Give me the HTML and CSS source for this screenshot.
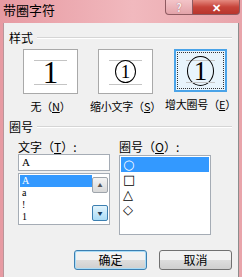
FILE: index.html
```html
<!DOCTYPE html>
<html lang="zh">
<head>
    <meta charset="UTF-8">
    <title>带圈字符</title>
    <link rel="stylesheet" href="styles.css">
</head>
<body>
    <div class="window">
        <div class="titlebar">
            <span class="title">带圈字符</span>
            <div class="caption-btns">
                <span class="cap help">?</span>
                <span class="cap close">✕</span>
            </div>
        </div>

        <div class="client">
            <!-- 样式 -->
            <div class="group-head"><span>样式</span><i></i></div>
            <div class="styles">
                <div class="opt">
                    <div class="preview">
                        <span class="guide top"></span>
                        <span class="digit">1</span>
                        <span class="guide bottom"></span>
                    </div>
                    <div class="opt-label">无（<u>N</u>）</div>
                </div>
                <div class="opt">
                    <div class="preview">
                        <span class="guide top"></span>
                        <span class="ring small">1</span>
                        <span class="guide bottom"></span>
                    </div>
                    <div class="opt-label">缩小文字（<u>S</u>）</div>
                </div>
                <div class="opt">
                    <div class="preview selected">
                        <span class="guide top"></span>
                        <span class="ring big">1</span>
                        <span class="guide bottom"></span>
                    </div>
                    <div class="opt-label">增大圈号（<u>E</u>）</div>
                </div>
            </div>

            <!-- 圈号 -->
            <div class="group-head second"><span>圈号</span><i></i></div>
            <div class="cols">
                <div class="col">
                    <div class="field-label">文字（<u>T</u>）:</div>
                    <div class="textbox">A</div>
                    <div class="listbox combo">
                        <ul class="items">
                            <li class="sel">A</li>
                            <li>a</li>
                            <li>!</li>
                            <li>1</li>
                        </ul>
                        <div class="scroll">
                            <span class="arrow up">▲</span>
                            <span class="arrow down">▼</span>
                        </div>
                    </div>
                </div>
                <div class="col">
                    <div class="field-label">圈号（<u>O</u>）:</div>
                    <ul class="listbox shapes">
                        <li class="sel">○</li>
                        <li>□</li>
                        <li>△</li>
                        <li>◇</li>
                    </ul>
                </div>
            </div>

            <div class="buttons">
                <button class="btn default">确定</button>
                <button class="btn">取消</button>
            </div>
        </div>
    </div>
</body>
</html>
```

FILE: styles.css
```css
body {
    margin: 0;
    font-family: "Noto Sans CJK SC", "Liberation Sans", sans-serif;
    font-size: 12px;
    color: #000;
    background: #f0f0f0;
}

.window {
    width: 242px;
    height: 277px;
    display: flex;
    flex-direction: column;
    background: linear-gradient(to right, #e79aa2, #f1b9be 55%, #e8a4aa);
    overflow: hidden;
}

.titlebar {
    height: 23px;
    display: flex;
    justify-content: space-between;
    align-items: flex-start;
    flex-shrink: 0;
}

.title {
    font-size: 13px;
    line-height: 14px;
    padding: 3px 0 0 3px;
}

.caption-btns {
    display: flex;
    margin-right: 2px;
}

.cap {
    height: 14px;
    line-height: 14px;
    text-align: center;
    color: #fff;
    font-weight: bold;
    border: 1px solid #8e5a60;
    border-top: none;
}

.help {
    width: 26px;
    font-size: 11px;
    background: linear-gradient(#f3c4c8, #e3a3a9);
    border-radius: 0 0 0 4px;
    color: #fbeaec;
    text-shadow: 0 0 1px #8a5a60;
}

.close {
    width: 46px;
    font-size: 11px;
    background: linear-gradient(#e58a80, #c7443a 50%, #b8352c);
    border-left: none;
    border-radius: 0 0 4px 0;
}

.client {
    flex: 1;
    margin: 0 3px 0 3px;
    border-left: 1px solid #b9959a;
    border-right: 1px solid #8d8d8d;
    background: #f0f0f0;
    display: flex;
    flex-direction: column;
}

.group-head {
    display: flex;
    align-items: center;
    gap: 4px;
    margin: 7px 6px 0 5px;
    line-height: 15px;
}

.group-head i {
    flex: 1;
    height: 0;
    border-top: 1px solid #d5d5d5;
    border-bottom: 1px solid #fff;
    margin-top: 1px;
}

.group-head.second {
    margin-top: 5px;
}

.styles {
    display: flex;
    margin: 4px 0 0 9px;
}

.opt {
    width: 76px;
    display: flex;
    flex-direction: column;
    align-items: center;
}

.preview {
    width: 53px;
    height: 43px;
    background: #fff;
    border: 1px solid #a9a9a9;
    display: flex;
    flex-direction: column;
    align-items: center;
    justify-content: center;
    position: relative;
}

.preview.selected {
    border: 2px solid #4aa3e8;
    width: 49px;
    height: 39px;
    background: #e8f4fc;
    outline: 1px dotted #333;
    outline-offset: -4px;
}

.guide {
    position: absolute;
    left: 10px;
    right: 10px;
    border-top: 1px solid #c4c4c4;
}

.guide.top {
    top: 10px;
}

.guide.bottom {
    bottom: 8px;
}

.selected .guide.top {
    top: 9px;
}

.selected .guide.bottom {
    bottom: 7px;
}

.digit {
    font-family: "Liberation Serif", serif;
    font-size: 31px;
    line-height: 28px;
    margin-top: 2px;
    position: relative;
}

.ring {
    font-family: "Liberation Serif", serif;
    border: 1px solid #000;
    border-radius: 50%;
    display: flex;
    align-items: center;
    justify-content: center;
    position: relative;
}

.ring.small {
    width: 19px;
    height: 21px;
    font-size: 19px;
    line-height: 19px;
}

.ring.big {
    width: 25px;
    height: 28px;
    font-size: 27px;
    line-height: 26px;
}

.opt-label {
    margin-top: 5px;
    white-space: nowrap;
    font-size: 11px;
    line-height: 15px;
    letter-spacing: -0.2px;
}

u {
    text-decoration: underline;
}

.cols {
    display: flex;
    gap: 9px;
    margin: 5px 0 0 14px;
}

.col {
    width: 92px;
}

.field-label {
    line-height: 15px;
}

.textbox {
    height: 15px;
    border: 1px solid #a5acb5;
    background: #fff;
    font-family: "Liberation Serif", serif;
    font-size: 11px;
    line-height: 15px;
    padding-left: 3px;
}

.listbox {
    list-style: none;
    margin: 0;
    padding: 0;
    border: 1px solid #a5acb5;
    background: #fff;
}

.combo {
    width: 88px;
    height: 48px;
    margin-top: 2px;
    display: flex;
    padding: 1px;
}

.items {
    list-style: none;
    margin: 0;
    padding: 0;
    flex: 1;
    font-family: "Liberation Serif", serif;
    font-size: 10px;
}

.items li {
    height: 12px;
    line-height: 12px;
    padding-left: 2px;
}

.items li.sel {
    background: #3399ff;
    color: #fff;
}

.scroll {
    width: 16px;
    display: flex;
    flex-direction: column;
    justify-content: space-between;
    padding: 2px 0;
}

.arrow {
    height: 14px;
    border: 1px solid #9ea4ab;
    border-radius: 2px;
    font-size: 5px;
    line-height: 14px;
    text-align: center;
    color: #555;
    background: linear-gradient(#f4f4f4, #d8d8d8);
}

.arrow.down {
    border-color: #3c7fb1;
    background: linear-gradient(#e3f4fc, #a9dbf6);
    color: #1a3a5a;
}

.shapes {
    height: 76px;
    margin-top: 1px;
    padding: 1px;
}

.shapes li {
    height: 15px;
    line-height: 15px;
    font-size: 13px;
    padding-left: 2px;
    font-family: "DejaVu Sans", sans-serif;
}

.shapes li.sel {
    background: #3399ff;
    color: #fff;
}

.buttons {
    display: flex;
    justify-content: flex-end;
    gap: 12px;
    margin: 15px 6px 0 0;
}

.btn {
    width: 73px;
    height: 20px;
    font-family: "Noto Sans CJK SC", sans-serif;
    font-size: 12px;
    line-height: 16px;
    padding: 0;
    border: 1px solid #707070;
    border-radius: 3px;
    background: linear-gradient(#f2f2f2 50%, #dddddd 50%, #cfcfcf);
    color: #000;
}

.btn.default {
    border-color: #3c7fb1;
    box-shadow: inset 0 0 0 1px #a9dcf7;
}
```
